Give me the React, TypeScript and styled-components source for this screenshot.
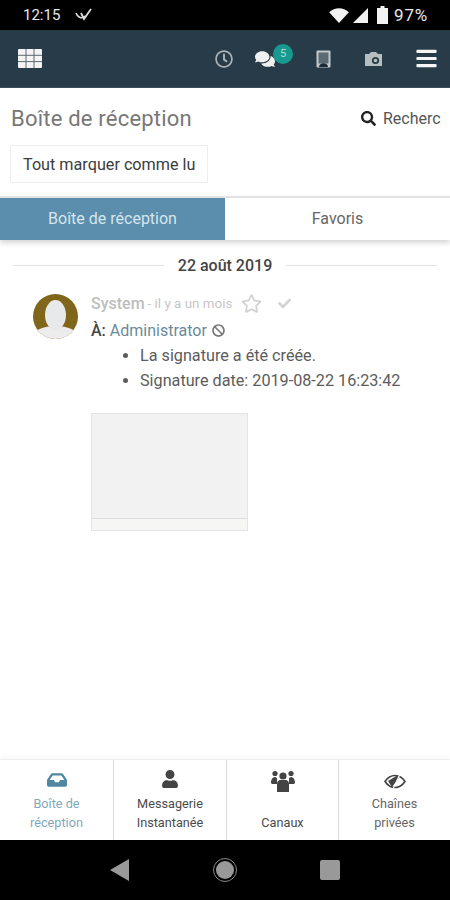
import styled, { createGlobalStyle } from "styled-components";
import {
  FaBan,
  FaBars,
  FaCheck,
  FaComments,
  FaInbox,
  FaRegClock,
  FaRegStar,
  FaSearch,
  FaUser,
} from "react-icons/fa";

const GlobalStyle = createGlobalStyle`
  html, body {
    margin: 0;
    padding: 0;
    background: #fff;
  }
  * {
    box-sizing: border-box;
  }
`;

const Screen = styled.div`
  width: 450px;
  height: 900px;
  display: flex;
  flex-direction: column;
  overflow: hidden;
  font-family: Roboto, "Liberation Sans", sans-serif;
  color: #333;
`;

const StatusBar = styled.div`
  height: 30px;
  flex: none;
  background: #000;
  color: #e8e8e8;
  display: flex;
  align-items: center;
  padding: 0 22px 0 23px;
  font-size: 15px;
`;

const StatusTime = styled.span`
  margin-right: 15px;
`;

const StatusRight = styled.div`
  margin-left: auto;
  display: flex;
  align-items: center;
  gap: 4px;
`;

const StatusPercent = styled.span`
  font-size: 17px;
  letter-spacing: 0.8px;
  margin-left: 2px;
`;

const TopBar = styled.div`
  height: 58px;
  flex: none;
  background: #273c48;
  border-bottom: 1px solid #3c4e58;
  display: flex;
  align-items: center;
  padding: 0 4px 0 18px;
`;

const TopIcons = styled.div`
  margin-left: auto;
  display: flex;
  align-items: center;
`;

const TopIcon = styled.div<{ $gap?: number; $color?: string }>`
  width: 40px;
  margin-left: ${(p) => p.$gap || 0}px;
  display: flex;
  justify-content: center;
  position: relative;
  color: ${(p) => p.$color || "#aab3b7"};
`;

const Badge = styled.span`
  position: absolute;
  top: -5px;
  left: 28px;
  width: 20px;
  height: 20px;
  border-radius: 50%;
  background: #17998f;
  color: #a9dcd6;
  font-size: 11px;
  display: flex;
  align-items: center;
  justify-content: center;
`;

const TitleRow = styled.div`
  height: 57px;
  flex: none;
  display: flex;
  align-items: center;
  padding: 3px 9px 0 11px;
  overflow: hidden;
`;

const Title = styled.h1`
  margin: 0;
  font-size: 22px;
  font-weight: 400;
  color: #777;
  letter-spacing: 0.2px;
`;

const SearchBox = styled.div`
  margin-left: auto;
  width: 80px;
  overflow: hidden;
  display: flex;
  align-items: center;
  gap: 7px;
  font-size: 16px;
  color: #555;
  white-space: nowrap;
`;

const SearchIcon = styled(FaSearch)`
  flex: none;
  color: #222;
`;

const MarkAll = styled.button`
  display: block;
  flex: none;
  width: 198px;
  height: 38px;
  margin: 0 0 0 10px;
  padding: 0 0 0 12px;
  text-align: left;
  background: #fff;
  border: 1px solid #eee;
  font-family: inherit;
  font-size: 16.2px;
  color: #3c3c3c;
  overflow: hidden;
  white-space: nowrap;
`;

const Tabs = styled.div`
  flex: none;
  height: 44px;
  margin-top: 13px;
  display: grid;
  grid-template-columns: 225px 225px;
  border-top: 2px solid #e2e2e2;
  box-shadow: 0 3px 5px rgba(0, 0, 0, 0.16);
`;

const Tab = styled.div<{ $active?: boolean }>`
  display: flex;
  align-items: center;
  justify-content: center;
  padding-bottom: 1px;
  font-size: 16px;
  background: ${(p) => (p.$active ? "#5b8dac" : "#fff")};
  color: ${(p) => (p.$active ? "#d5e6ee" : "#666")};
`;

const DateRow = styled.div`
  flex: none;
  display: flex;
  align-items: center;
  gap: 14px;
  margin: 15px 13px 0;
  height: 20px;
  font-size: 16px;
  font-weight: 500;
  color: #444;
  white-space: nowrap;
`;

const DateLine = styled.div`
  flex: 1;
  height: 1px;
  background: #e2e2e2;
`;

const Message = styled.div`
  flex: 1;
  display: flex;
  padding: 19px 0 0 33px;
`;

const Avatar = styled.div`
  flex: none;
  width: 45px;
  height: 45px;
  border-radius: 50%;
  background: #7f661b;
  overflow: hidden;
  position: relative;
`;

const AvatarHead = styled.div`
  position: absolute;
  top: 6px;
  left: 12px;
  width: 21px;
  height: 30px;
  border-radius: 50%;
  background: #e8e9ea;
`;

const AvatarBody = styled.div`
  position: absolute;
  top: 32px;
  left: 0;
  width: 45px;
  height: 20px;
  border-radius: 50%;
  background: #ececec;
`;

const MessageBody = styled.div`
  margin-left: 13px;
  display: flex;
  flex-direction: column;
`;

const Sender = styled.div`
  height: 20px;
  margin-top: -1px;
  display: flex;
  align-items: center;
  color: #bdbdbd;
  font-size: 16px;
  font-weight: 500;
  white-space: nowrap;
`;

const When = styled.span`
  font-size: 13.4px;
  font-weight: 400;
  margin-left: 3px;
  color: #c6c6c6;
`;

const StarIcon = styled(FaRegStar)`
  margin-left: 9px;
  color: #d2d2d2;
`;

const CheckIcon = styled(FaCheck)`
  margin-left: 16px;
  color: #d2d2d2;
`;

const Recipient = styled.div`
  margin-top: 7px;
  height: 20px;
  display: flex;
  align-items: center;
  gap: 5px;
  font-size: 16px;
  color: #6a8c9a;
`;

const RecipientLabel = styled.b`
  color: #444;
  font-weight: 500;
`;

const Facts = styled.ul`
  margin: 3px 0 0;
  padding: 0 0 0 49px;
  font-size: 16.2px;
  line-height: 25px;
  color: #5c5c5c;
  white-space: nowrap;
`;

const Signature = styled.div`
  margin-top: 20px;
  width: 157px;
  height: 118px;
  border: 1px solid #e4e4e4;
  background: #f2f2f2;
  display: flex;
  flex-direction: column;
  justify-content: flex-end;
`;

const SignatureFoot = styled.div`
  height: 12px;
  border-top: 1px solid #dedede;
  background: #f6f6f4;
`;

const BottomNav = styled.div`
  flex: none;
  height: 81px;
  display: grid;
  grid-template-columns: 114px 113px 112px 111px;
  border-top: 1px solid #efefef;
  box-shadow: 0 -3px 5px rgba(0, 0, 0, 0.03);
`;

const NavItem = styled.div<{ $active?: boolean; $muted?: boolean }>`
  position: relative;
  border-right: 1px solid #dcdcdc;
  color: ${(p) => (p.$active ? "#7fa9ba" : p.$muted ? "#666" : "#4a4a4a")};
  font-size: 12.7px;
  line-height: 19px;
  text-align: center;
  display: flex;
  flex-direction: column;
  align-items: center;
  justify-content: flex-end;
  padding-bottom: 8px;
  &:last-child {
    border-right: none;
  }
`;

const NavIcon = styled.div<{ $color?: string }>`
  position: absolute;
  top: 10px;
  left: 0;
  right: 0;
  display: flex;
  justify-content: center;
  color: ${(p) => p.$color || "#444"};
`;

const SystemNav = styled.div`
  flex: none;
  height: 60px;
  background: #000;
  display: flex;
  align-items: center;
  padding-left: 110px;
`;

const BackButton = styled.svg`
  margin-right: 84px;
`;

const HomeButton = styled.svg`
  margin-right: 83px;
`;

const RecentButton = styled.div`
  width: 20px;
  height: 20px;
  border-radius: 2px;
  background: #999;
`;

export default function App() {
  return (
    <Screen>
      <GlobalStyle />
      <StatusBar>
        <StatusTime>12:15</StatusTime>
        <svg width="18" height="14" viewBox="0 0 18 14">
          <path d="M1 5c2 5 6 6 9 3" fill="none" stroke="#ddd" strokeWidth="1.6" />
          <path d="M6 5l3 6 7-10" fill="none" stroke="#ddd" strokeWidth="1.8" />
        </svg>
        <StatusRight>
          <svg width="20" height="15" viewBox="0 0 21 16">
            <path d="M0 4.5C6 -1 15 -1 21 4.5L10.5 16z" fill="#f2f2f2" />
          </svg>
          <svg width="15" height="15" viewBox="0 0 16 16">
            <path d="M16 0v16H0z" fill="#f2f2f2" />
          </svg>
          <svg width="11" height="18" viewBox="0 0 11 18" style={{ marginLeft: 5 }}>
            <path d="M3.5 0h4v2H11v16H0V2h3.5z" fill="#f2f2f2" />
          </svg>
          <StatusPercent>97%</StatusPercent>
        </StatusRight>
      </StatusBar>

      <TopBar>
        <svg width="24" height="19" viewBox="0 0 24 19">
          <rect width="24" height="19" rx="1" fill="#f4f4f4" />
          <path d="M8 0v19M16 0v19M0 6.3h24M0 12.6h24" stroke="#5b6a72" strokeWidth="1" />
        </svg>
        <TopIcons>
          <TopIcon>
            <FaRegClock size={18} />
          </TopIcon>
          <TopIcon $gap={1} $color="#f0f0f0">
            <FaComments size={20} />
            <Badge>5</Badge>
          </TopIcon>
          <TopIcon $gap={18} $color="#c3c9cc">
            <svg width="15" height="18" viewBox="0 0 15 18">
              <rect x="0.5" y="0.5" width="14" height="17" rx="1" fill="#c3c9cc" />
              <rect x="2.5" y="2.5" width="10" height="11" fill="#5a6b74" />
              <path d="M3 17c0-5 9-5 9 0z" fill="#1c2c36" />
            </svg>
          </TopIcon>
          <TopIcon $gap={10}>
            <svg width="19" height="16" viewBox="0 0 19 16">
              <path d="M1 3h4l2-2h5l2 2h4v12H1z" fill="#b6bec2" />
              <circle cx="11.5" cy="9.5" r="3.6" fill="#273c48" />
              <circle cx="11.5" cy="9.5" r="1.8" fill="#b6bec2" />
            </svg>
          </TopIcon>
          <TopIcon $gap={13} $color="#f6f6f6">
            <FaBars size={23} />
          </TopIcon>
        </TopIcons>
      </TopBar>

      <TitleRow>
        <Title>Boîte de réception</Title>
        <SearchBox>
          <SearchIcon size={15} />
          <span>Rechercher</span>
        </SearchBox>
      </TitleRow>

      <MarkAll>Tout marquer comme lu</MarkAll>

      <Tabs>
        <Tab $active>Boîte de réception</Tab>
        <Tab>Favoris</Tab>
      </Tabs>

      <DateRow>
        <DateLine />
        22 août 2019
        <DateLine />
      </DateRow>

      <Message>
        <Avatar>
          <AvatarBody />
          <AvatarHead />
        </Avatar>
        <MessageBody>
          <Sender>
            System
            <When>- il y a un mois</When>
            <StarIcon size={21} />
            <CheckIcon size={13} />
          </Sender>
          <Recipient>
            <span>
              <RecipientLabel>À:</RecipientLabel> Administrator
            </span>
            <FaBan size={13} color="#777" />
          </Recipient>
          <Facts>
            <li>La signature a été créée.</li>
            <li>Signature date: 2019-08-22 16:23:42</li>
          </Facts>
          <Signature>
            <SignatureFoot />
          </Signature>
        </MessageBody>
      </Message>

      <BottomNav>
        <NavItem $active>
          <NavIcon $color="#4f87a3">
            <FaInbox size={20} />
          </NavIcon>
          Boîte de
          <br />
          réception
        </NavItem>
        <NavItem>
          <NavIcon>
            <FaUser size={18} />
          </NavIcon>
          Messagerie
          <br />
          Instantanée
        </NavItem>
        <NavItem>
          <NavIcon>
            <svg width="24" height="22" viewBox="0 0 24 22">
              <g fill="#444">
                <circle cx="4" cy="3.500" r="2.600" />
                <circle cx="20" cy="3.500" r="2.600" />
                <circle cx="12" cy="6" r="3.600" />
                <path d="M0 13c0-4 2-6 4-6l2 1v6H1zM24 13c0-4-2-6-4-6l-2 1v6h5z" />
                <path d="M6 22v-8c0-3 2-4 3-4h6c1 0 3 1 3 4v8z" />
              </g>
            </svg>
          </NavIcon>
          Canaux
        </NavItem>
        <NavItem $muted>
          <NavIcon>
            <svg width="22" height="15" viewBox="0 0 22 15" style={{ marginTop: 4 }}>
              <path
                d="M1 7.500C4 3 8 1.500 11 1.500s7 1.500 10 6c-3 4.500-7 6-10 6s-7-1.500-10-6z"
                fill="none"
                stroke="#444"
                strokeWidth="1.600"
              />
              <path d="M4 7l10-6 1 3-7 9z" fill="#444" />
              <path d="M16 0L9 15" stroke="#fff" strokeWidth="1.200" />
            </svg>
          </NavIcon>
          Chaînes
          <br />
          privées
        </NavItem>
      </BottomNav>

      <SystemNav>
        <BackButton width="19" height="22" viewBox="0 0 19 22">
          <path d="M19 0v22L0 11z" fill="#999" />
        </BackButton>
        <HomeButton width="24" height="24" viewBox="0 0 24 24">
          <circle cx="12" cy="12" r="11.500" fill="none" stroke="#888" strokeWidth="1" />
          <circle cx="12" cy="12" r="9" fill="#999" />
        </HomeButton>
        <RecentButton />
      </SystemNav>
    </Screen>
  );
}
